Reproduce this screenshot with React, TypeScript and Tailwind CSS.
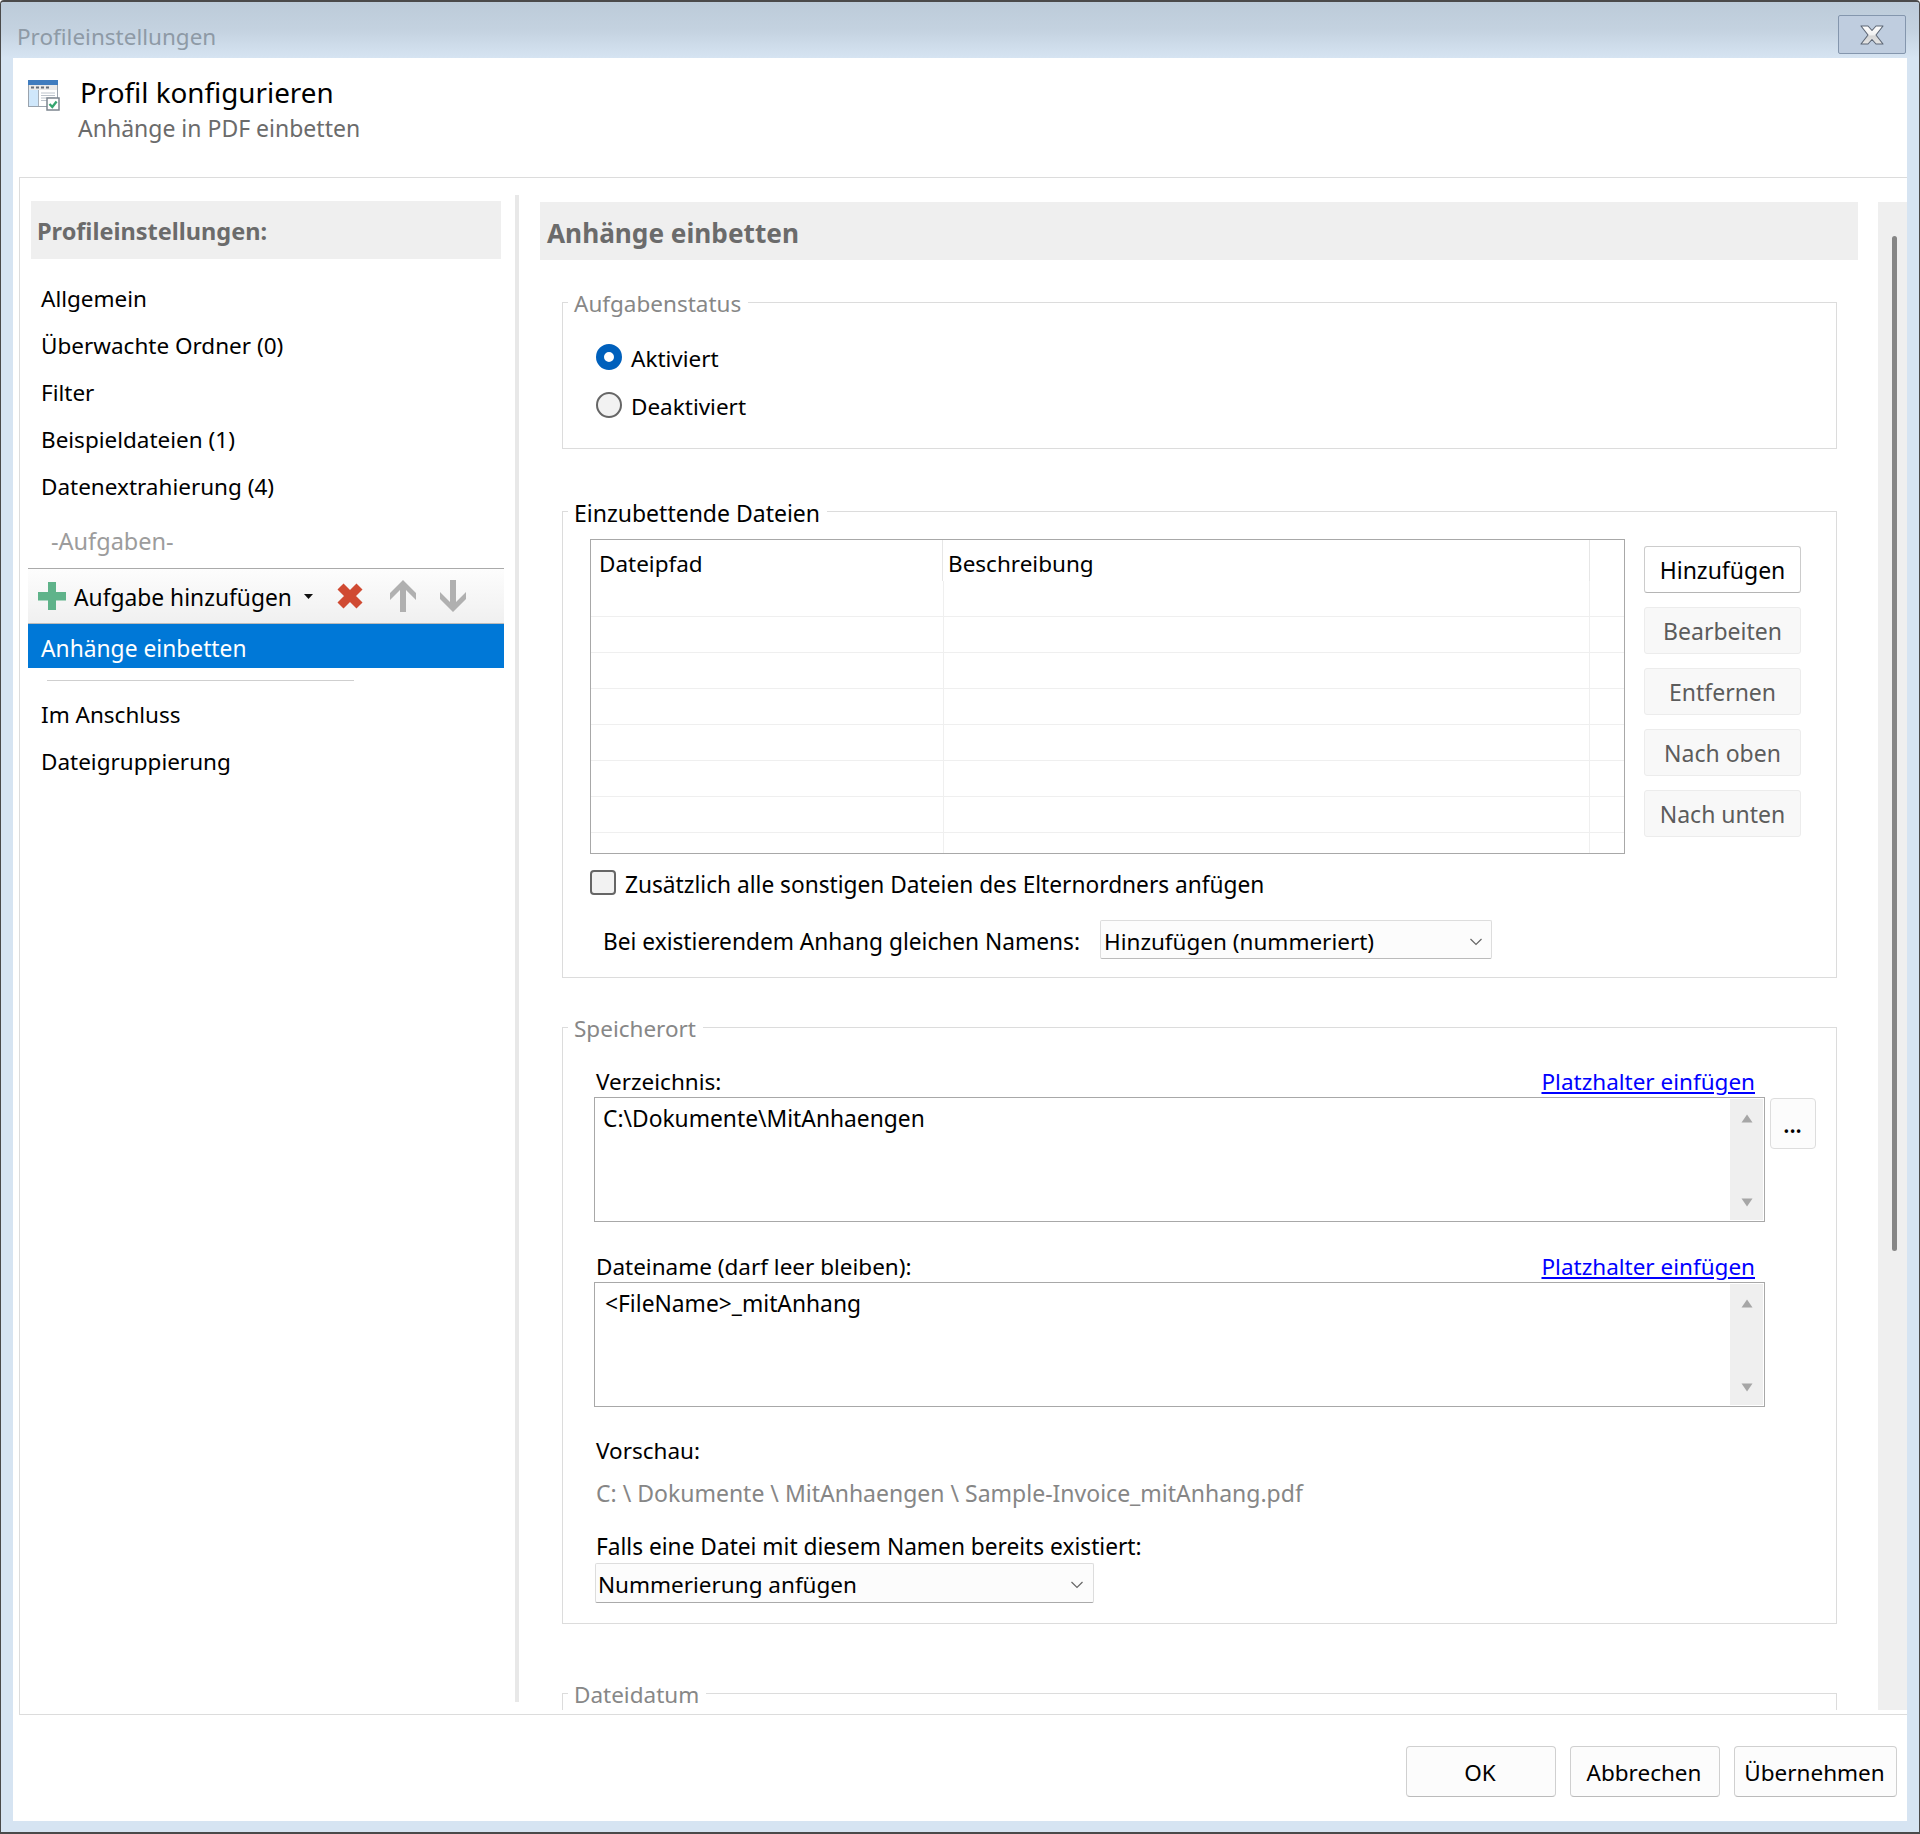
const font = { fontFamily: '"Noto Sans", sans-serif' };

const tableRows = [0, 1, 2, 3, 4, 5, 6];

function Btn({ label, disabled }: { label: string; disabled?: boolean }) {
  return (
    <div
      className={
        disabled
          ? 'w-[157px] h-[47px] pt-[2px] rounded-[3px] border border-[#ececec] bg-[#f8f8f8] text-[#5c5c5c] text-[23px] flex items-center justify-center'
          : 'w-[157px] h-[47px] pt-[2px] rounded-[3px] border border-[#cccccc] border-b-[#b5b5b5] bg-white text-black text-[23px] flex items-center justify-center'
      }
    >
      {label}
    </div>
  );
}

function FooterBtn({ label, w }: { label: string; w: string }) {
  return (
    <div className={`${w} h-[51px] pt-[2px] pr-[2px] rounded-[4px] border border-[#d0d0d0] border-b-[#bbbbbb] bg-[#fcfcfc] flex items-center justify-center`}>
      {label}
    </div>
  );
}

function Chevron() {
  return (
    <svg width="14" height="8" viewBox="0 0 14 8" fill="none" stroke="#666" strokeWidth="1.2">
      <path d="M1.5 1l5.5 5.500L12.500 1" />
    </svg>
  );
}

function Legend({ text, dark }: { text: string; dark?: boolean }) {
  return (
    <legend className={`ml-[5px] pl-[6px] pr-[7px] pt-[4px] leading-[30px] ${dark ? 'text-black text-[23px]' : 'text-[#878787]'}`}>
      {text}
    </legend>
  );
}

function TextBox({ value, indent }: { value: string; indent: string }) {
  return (
    <div className="w-[1171px] h-[125px] border border-[#a8a8a8] p-px flex justify-between bg-white">
      <div className={`${indent} pt-[5px] leading-[30px] text-[22.8px]`}>{value}</div>
      <div className="w-[33px] bg-[#efefef] flex flex-col items-center justify-between pt-[15px] pb-[13px]">
        <svg width="12" height="9" viewBox="0 0 12 9"><path d="M6 0.500L11.500 8.500H0.500z" fill="#a6a6a6" /></svg>
        <svg width="12" height="9" viewBox="0 0 12 9"><path d="M6 8.500L11.500 0.500H0.500z" fill="#a6a6a6" /></svg>
      </div>
    </div>
  );
}

function LabelRow({ label }: { label: string }) {
  return (
    <div className="w-[1161px] h-[32px] flex justify-between pl-[2px] leading-[34px]">
      <span>{label}</span>
      <span className="text-[#0000ff] underline">Platzhalter einfügen</span>
    </div>
  );
}

export default function App() {
  return (
    <div style={font} className="w-[1920px] h-[1834px] bg-[#d6e4f2] text-black text-[22.5px] flex flex-col border-x border-b-2 border-t-2 border-[#4a4a4a] rounded-t-[4px] overflow-hidden">
      {/* Title bar */}
      <div className="h-[56px] flex-none pl-[16px] pr-[13px] flex justify-between bg-gradient-to-b from-[#bccbd9] via-[#c4d2e0] to-[#d6e4f2]">
        <div className="pt-[14px] leading-[42px] text-[#8e9aa6]">Profileinstellungen</div>
        <div className="mt-[13px] w-[68px] h-[39px] rounded-[2px] border border-[#8496ad] bg-[#bfcddf] flex items-center justify-center">
          <svg width="24" height="20" viewBox="0 0 24 20">
            <defs>
              <linearGradient id="closeFill" x1="0" y1="0" x2="0" y2="1">
                <stop offset="0" stopColor="#ffffff" />
                <stop offset="0.5" stopColor="#f0f0f0" />
                <stop offset="0.55" stopColor="#d4d4d4" />
                <stop offset="1" stopColor="#e6e6e6" />
              </linearGradient>
            </defs>
            <path d="M1 1h7l4 4.500 4-4.500h7l-7 9 7 9h-7l-4-4.500-4 4.500H1l7-9z" fill="url(#closeFill)" stroke="#5c6675" strokeWidth="1.100" strokeLinejoin="round" />
          </svg>
        </div>
      </div>

      <div className="ml-[12px] w-[1894px] flex-1 bg-white flex flex-col">
        {/* Header */}
        <div className="h-[119px] flex-none flex pl-[15px]">
          <svg width="32" height="31" viewBox="0 0 32 31" className="mt-[22px]">
            <rect x="0.500" y="0.500" width="29" height="26" fill="#fff" stroke="#9aa3ad" />
            <rect x="0" y="0" width="30" height="5" fill="#3f7cbf" />
            <rect x="1" y="5" width="28" height="5" fill="#e9e9e9" />
            <path d="M3 7.500h3M8 7.500h3M13 7.500h3M18 7.500h3" stroke="#666f7a" strokeWidth="2" />
            <rect x="1" y="10" width="9" height="16" fill="#cfe7fb" />
            <path d="M10.500 10v16" stroke="#a6b0ba" />
            <path d="M13 13h14M13 15.500h14M13 18h14M13 20.500h6" stroke="#bcc3cb" />
            <rect x="19" y="18" width="12" height="12" fill="#fff" stroke="#7c858f" strokeWidth="1.500" />
            <path d="M21.500 24l2.800 3 4.300-5.500" fill="none" stroke="#35a56f" strokeWidth="2.400" />
          </svg>
          <div className="ml-[20px] flex flex-col">
            <div className="mt-[12px] text-[27.8px] leading-[44px]">Profil konfigurieren</div>
            <div className="-ml-[2px] -mt-px text-[23px] leading-[30px] text-[#6b6b6b]">Anhänge in PDF einbetten</div>
          </div>
        </div>

        {/* Main */}
        <div className="ml-[6px] h-[1538px] flex-none border-l border-t border-b border-[#dcdcdc] flex overflow-hidden">
          {/* Left column */}
          <div className="w-[495px] flex-none pt-[23px]">
            <div className="ml-[11px] w-[470px] h-[58px] bg-[#efefef] flex items-center pl-[6px] pt-[3px] font-bold text-[#6b6b6b] text-[23.500px]">
              Profileinstellungen:
            </div>
            <div className="mt-[16px] ml-[21px]">
              {['Allgemein', 'Überwachte Ordner (0)', 'Filter', 'Beispieldateien (1)', 'Datenextrahierung (4)'].map(t => (
                <div key={t} className="h-[47px] leading-[47px]">{t}</div>
              ))}
            </div>
            <div className="h-[58px] pt-[8px] pl-[31px] text-[23.500px] leading-[46px] text-[#9c9c9c]">-Aufgaben-</div>
            <div className="ml-[8px] w-[476px] h-[56px] border-t border-b border-t-[#aaaaaa] border-b-[#bbbbbb] bg-gradient-to-b from-[#fdfdfd] to-[#f0f0f0] flex items-center pl-[10px]">
              <svg width="28" height="28" viewBox="0 0 28 28" className="flex-none">
                <path d="M10 0h8v10h10v8.500H18V28h-8V18.500H0V10h10z" fill="#5fb38a" />
              </svg>
              <span className="ml-[8px] w-[230px] flex-none pt-[3px] text-[22.8px] leading-[30px]">Aufgabe hinzufügen</span>
              <svg width="9" height="5" viewBox="0 0 9 5" className="flex-none"><path d="M0 0h9L4.500 5z" fill="#111" /></svg>
              <svg width="28" height="28" viewBox="0 0 28 28" className="ml-[23px] flex-none">
                <path d="M4.500 4.500l19 19M23.500 4.500l-19 19" stroke="#d04a32" strokeWidth="8.500" fill="none" />
              </svg>
              <svg width="26" height="32" viewBox="0 0 26 32" className="ml-[26px] flex-none">
                <path d="M13 0L26 13v7L16 10v22h-6V10L0 20v-7z" fill="#b0b0b0" />
              </svg>
              <svg width="26" height="32" viewBox="0 0 26 32" className="ml-[24px] flex-none">
                <path d="M13 32L26 19v-7L16 22V0h-6v22L0 12v7z" fill="#b0b0b0" />
              </svg>
            </div>
            <div className="ml-[8px] w-[476px] h-[44px] bg-[#0078d7] text-white text-[22.8px] pl-[13px] leading-[49px]">Anhänge einbetten</div>
            <div className="ml-[27px] mt-[12px] w-[307px] h-px bg-[#cfcfcf]" />
            <div className="mt-[10px] ml-[21px]">
              <div className="h-[47px] leading-[47px]">Im Anschluss</div>
              <div className="h-[47px] leading-[47px]">Dateigruppierung</div>
            </div>
          </div>

          {/* Separator */}
          <div className="w-[4px] h-[1507px] mt-[17px] flex-none bg-[#e8e8e8]" />

          {/* Right pane */}
          <div className="ml-[21px] w-[1318px] h-[1532px] flex-none overflow-hidden pt-[24px]">
            <div className="h-[58px] bg-[#efefef] flex items-center pl-[7px] pt-[5px] font-bold text-[#6b6b6b] text-[26.200px]">
              Anhänge einbetten
            </div>

            <fieldset className="ml-[22px] w-[1275px] h-[164px] mt-[25px] border border-[#dcdcdc]">
              <Legend text="Aufgabenstatus" />
              <div className="pt-[14px] pl-[33px]">
                <div className="h-[48px] flex items-center">
                  <div className="w-[26px] h-[26px] rounded-full border-[8px] border-[#0060bc] bg-white" />
                  <span className="ml-[9px] mt-[3px]">Aktiviert</span>
                </div>
                <div className="h-[48px] flex items-center">
                  <div className="w-[26px] h-[26px] rounded-full border-2 border-[#666666] bg-[#f2f2f2]" />
                  <span className="ml-[9px] mt-[3px]">Deaktiviert</span>
                </div>
              </div>
            </fieldset>

            <fieldset className="ml-[22px] w-[1275px] h-[484px] mt-[45px] border border-[#dcdcdc]">
              <Legend text="Einzubettende Dateien" dark />
              <div className="pt-[11px] pl-[27px]">
                <div className="flex">
                  <div className="w-[1035px] h-[315px] border border-[#a8a8a8] flex-none overflow-hidden">
                    <div className="h-[41px] flex">
                      <div className="w-[352px] border-r border-[#e6e6e6] pl-[8px] leading-[47px]">Dateipfad</div>
                      <div className="w-[647px] border-r border-[#e6e6e6] pl-[5px] leading-[47px]">Beschreibung</div>
                    </div>
                    <div className="h-[35px] flex">
                      <div className="w-[353px] border-r border-[#efefef]" />
                      <div className="w-[646px] border-r border-[#efefef]" />
                    </div>
                    {tableRows.map(r => (
                      <div key={r} className="h-[36px] border-t border-[#efefef] flex">
                        <div className="w-[353px] border-r border-[#efefef]" />
                        <div className="w-[646px] border-r border-[#efefef]" />
                      </div>
                    ))}
                  </div>
                  <div className="ml-[19px] mt-[7px] flex flex-col gap-[14px]">
                    <Btn label="Hinzufügen" />
                    <Btn label="Bearbeiten" disabled />
                    <Btn label="Entfernen" disabled />
                    <Btn label="Nach oben" disabled />
                    <Btn label="Nach unten" disabled />
                  </div>
                </div>
                <div className="mt-[16px] h-[25px] flex items-center">
                  <div className="w-[26px] h-[25px] rounded-[4px] border-2 border-[#666666] bg-[#f2f2f2]" />
                  <span className="ml-[9px] mt-[5px] text-[22.7px]">Zusätzlich alle sonstigen Dateien des Elternordners anfügen</span>
                </div>
                <div className="mt-[25px] h-[39px] pl-[13px] flex items-center">
                  <span className="w-[497px] flex-none mt-[5px] text-[22.7px]">Bei existierendem Anhang gleichen Namens:</span>
                  <div className="w-[392px] h-[39px] flex-none border border-[#dddddd] border-b-[#bbbbbb] rounded-[2px] bg-[#fcfcfc] pl-[3px] pr-[8px] pt-[4px] flex items-center justify-between">
                    <span>Hinzufügen (nummeriert)</span>
                    <Chevron />
                  </div>
                </div>
              </div>
            </fieldset>

            <fieldset className="ml-[22px] w-[1275px] h-[614px] mt-[32px] border border-[#dcdcdc]">
              <Legend text="Speicherort" />
              <div className="pt-[21px] pl-[31px]">
                <LabelRow label="Verzeichnis:" />
                <div className="flex">
                  <TextBox value="C:\Dokumente\MitAnhaengen" indent="pl-[7px]" />
                  <div className="ml-[5px] mt-px w-[46px] h-[51px] rounded-[4px] border border-[#dddddd] bg-[#fcfcfc] flex items-center justify-center font-semibold leading-none pt-[3px] pr-px">...</div>
                </div>
                <div className="mt-[28px]">
                  <LabelRow label="Dateiname (darf leer bleiben):" />
                </div>
                <TextBox value="<FileName>_mitAnhang" indent="pl-[9px]" />
                <div className="mt-[27px] pl-[2px] h-[32px] leading-[34px]">Vorschau:</div>
                <div className="mt-[11px] pl-[2px] h-[32px] leading-[32px] text-[23px] text-[#868686]">C: \ Dokumente \ MitAnhaengen \ Sample-Invoice_mitAnhang.pdf</div>
                <div className="mt-[22px] pl-[2px] h-[32px] leading-[32px] text-[22.7px]">Falls eine Datei mit diesem Namen bereits existiert:</div>
                <div className="ml-px w-[499px] h-[40px] border border-[#dddddd] border-b-[#aaaaaa] rounded-[2px] bg-[#fcfcfc] pl-[2px] pr-[9px] pt-[3px] flex items-center justify-between">
                  <span>Nummerierung anfügen</span>
                  <Chevron />
                </div>
              </div>
            </fieldset>

            <fieldset className="ml-[22px] w-[1275px] h-[200px] mt-[52px] border border-[#dcdcdc]">
              <Legend text="Dateidatum" />
            </fieldset>
          </div>

          {/* Scrollbar */}
          <div className="ml-[20px] w-[29px] h-[1508px] mt-[24px] flex-none bg-[#efefef] pt-[34px] pl-[14px]">
            <div className="w-[5px] h-[1015px] rounded-[3px] bg-[#868686]" />
          </div>
        </div>

        {/* Footer */}
        <div className="flex-1 pt-[31px] pr-[10px] flex justify-end gap-[14px]">
          <FooterBtn label="OK" w="w-[150px]" />
          <FooterBtn label="Abbrechen" w="w-[150px]" />
          <FooterBtn label="Übernehmen" w="w-[163px]" />
        </div>
      </div>
      <div className="h-[11px] flex-none" />
    </div>
  );
}
